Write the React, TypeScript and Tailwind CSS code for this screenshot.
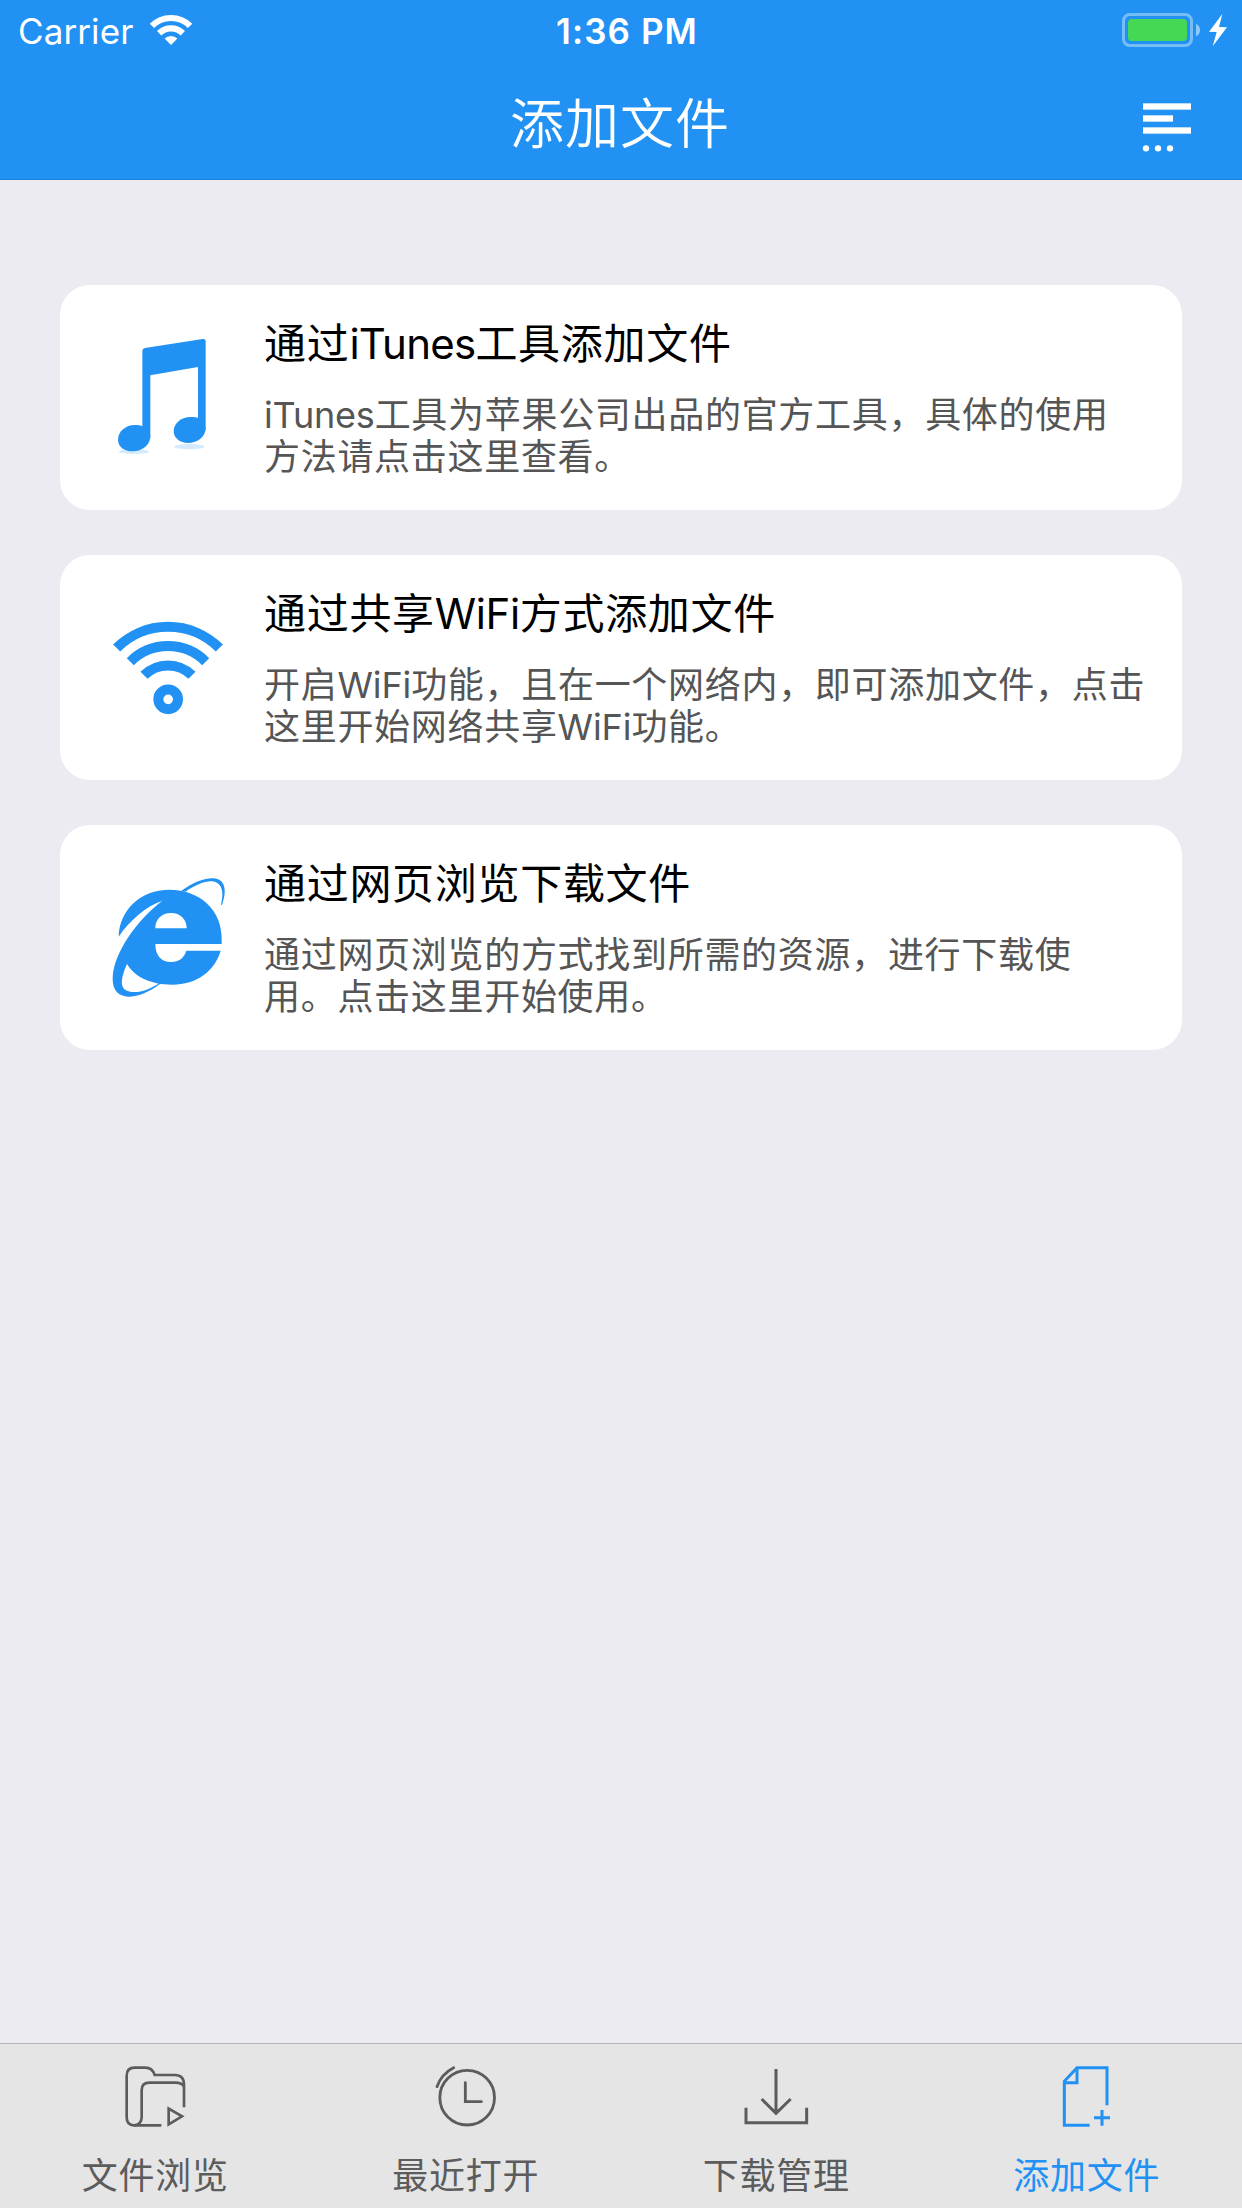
import type { ReactNode } from "react"

interface Method {
  title: ReactNode
  lines: ReactNode[]
  icon: ReactNode
}

interface Tab {
  label: string
  icon: ReactNode
  active?: boolean
}

function MusicIcon() {
  return (
    <svg viewBox="180 180 360 390" className="w-[120px] h-[130px]" fill="#2192f3">
      <ellipse cx="252" cy="545" rx="45" ry="7" fill="#d3ebfd" />
      <ellipse cx="418" cy="530" rx="45" ry="8" fill="#d3ebfd" />
      <path d="M277 243 Q277 236 285 234 L458 207 Q467 206 467 213 V480 H444 V291 L301 316 V505 H277 Z" />
      <path d="M301 498 C301 525 277 544 248 544 C222 544 204 530 204 509 C204 484 228 465 254 465 C264 465 272 466 278 469 Z" />
      <path d="M467 474 C467 500 443 519 414 519 C389 519 371 504 371 484 C371 459 395 441 422 441 C432 441 439 442 445 444 Z" />
    </svg>
  )
}

function ShareWifiIcon() {
  return (
    <svg viewBox="180 180 360 390" className="w-[120px] h-[130px]" fill="none" stroke="#2192f3" strokeWidth="30">
      <path d="M200 324 A218 218 0 0 1 508 324" />
      <path d="M241 365 A160 160 0 0 1 467 365" />
      <path d="M282 406 A102 102 0 0 1 426 406" />
      <circle cx="354.500" cy="478" r="29.500" />
    </svg>
  )
}

function BrowserIcon() {
  return (
    <svg viewBox="180 180 360 390" className="w-[120px] h-[130px]" fill="#2192f3">
      <path
        fillRule="evenodd"
        d="M206 380 C208 300 272 239 358 239 C450 239 517 300 515 390 V402 H316 C316 438 335 456 363 456 C388 456 403 442 409 422 H512 C495 482 440 524 367 524 L330 522 C300 545 265 560 236 560 C205 560 188 540 188 508 C188 430 262 330 336 273 C290 288 240 330 206 380 Z M316 355 H410 C410 327 391 309 363 309 C335 309 316 327 316 355 Z M231 462 C205 520 212 546 252 546 C280 546 300 535 326 521 C280 512 248 492 231 462 Z"
      />
      <path d="M393 243 C430 217 462 205 487 205 C522 205 534 235 516 285 L513 284 C524 243 514 214 482 214 C462 214 436 226 406 245 Z" />
    </svg>
  )
}

const methods: Method[] = [
  {
    title: <>通过<span className="tracking-[-0.75px]">iTunes</span>工具添加文件</>,
    lines: [
      <><span className="tracking-[-0.2px]">iTunes</span>工具为苹果公司出品的官方工具，具体的使用</>,
      "方法请点击这里查看。",
    ],
    icon: <MusicIcon />,
  },
  {
    title: <>通过共享<span className="tracking-[-0.4px]">WiFi</span>方式添加文件</>,
    lines: [
      <>开启<span className="tracking-[-0.1px]">WiFi</span>功能，且在一个网络内，即可添加文件，点击</>,
      <>这里开始网络共享<span className="tracking-[-0.1px]">WiFi</span>功能。</>,
    ],
    icon: <ShareWifiIcon />,
  },
  {
    title: "通过网页浏览下载文件",
    lines: ["通过网页浏览的方式找到所需的资源，进行下载使", "用。点击这里开始使用。"],
    icon: <BrowserIcon />,
  },
]

const tabs: Tab[] = [
  {
    label: "文件浏览",
    icon: (
      <svg viewBox="235 99 225 198" className="w-[75px] h-[66px]" fill="none" stroke="currentColor" strokeWidth="8">
        <path d="M365 286 H283 Q261 286 261 262 V137 Q261 113 285 113 H317 Q338 113 345 135 H405 Q433 135 433 164 V232" />
        <path d="M283 286 Q305 285 306 262 V181 Q306 158 329 158 H408 Q425 158 433 169" />
        <path d="M387 236 V283 L427 259 Z" />
      </svg>
    ),
  },
  {
    label: "最近打开",
    icon: (
      <svg viewBox="205 99 225 198" className="w-[75px] h-[66px]" fill="none" stroke="currentColor" strokeWidth="8.500" strokeLinecap="round">
        <circle cx="322.500" cy="203" r="82" />
        <path d="M317 158 V215 H365" />
        <path d="M232 170 Q245 132 282 113" />
      </svg>
    ),
  },
  {
    label: "下载管理",
    icon: (
      <svg viewBox="237 99 225 198" className="w-[75px] h-[66px]" fill="none" stroke="currentColor" strokeWidth="9">
        <path d="M348 117 V249 M305 207 L348 250 L392 207" />
        <path d="M258 233 V278 H440 V233" />
      </svg>
    ),
  },
  {
    label: "添加文件",
    active: true,
    icon: (
      <svg viewBox="269 99 225 198" className="w-[75px] h-[66px]" fill="none" stroke="currentColor" strokeWidth="9">
        <path d="M391 286 H315 V154 L353 113 H443 V226" />
        <path d="M353 113 V158 H315" />
        <path d="M404 263 H452 M428 240 V287" />
      </svg>
    ),
  },
]

function StatusBar() {
  return (
    <div className="h-[60px] grid grid-cols-3 items-start">
      <div className="flex items-start pl-[18px]">
        <span className="mt-[10px] w-[116px] text-[35px] leading-[42px] tracking-[0.1px]">Carrier</span>
        <svg viewBox="148 12 46 36" className="w-[46px] h-9 mt-3 ml-[14px]" fill="none" stroke="white" strokeWidth="6.200">
          <path d="M151.900 25.900 A27 27 0 0 1 190.100 25.900" />
          <path d="M159.200 33.200 A16.700 16.700 0 0 1 182.800 33.200" />
          <path d="M171 45 L164.600 38.600 A9 9 0 0 1 177.400 38.600 Z" fill="white" stroke="none" />
        </svg>
      </div>
      <div className="mt-[10px] pl-[12px] text-center text-[35px] leading-[42px] font-semibold tracking-[1.1px]">1:36 PM</div>
      <div className="flex justify-end pr-3 pt-3">
        <svg viewBox="120 36 330 108" className="w-[110px] h-9" fill="none">
          <rect x="130.500" y="43.500" width="204" height="93" rx="19" stroke="#75bdf8" strokeWidth="9" />
          <rect x="144" y="57" width="177" height="66" rx="11" fill="#44d855" />
          <path d="M348 71 Q360 77 360 90 Q360 103 348 109 Z" fill="#90c8f9" />
          <path d="M427 42 L387 95 L410 96 L398 139 L441 82 L417 81 Z" fill="white" />
        </svg>
      </div>
    </div>
  )
}

function NavBar() {
  return (
    <div className="h-[120px] grid grid-cols-[1fr_auto_1fr] items-center border-b border-[#1d7fd3]">
      <div />
      <h1 className="text-[54px] leading-[64px] font-[350] tracking-[1px] mt-[11px] mr-[2px]">添加文件</h1>
      <div className="flex justify-end pr-[50px] mt-[15px]">
        <svg viewBox="186 306 150 153" className="w-[50px] h-[51px]" fill="white">
          <rect x="189" y="310" width="144" height="19" />
          <rect x="189" y="346" width="90" height="19" />
          <rect x="189" y="382" width="144" height="19" />
          <circle cx="198" cy="445" r="9.500" />
          <circle cx="234" cy="445" r="9.500" />
          <circle cx="270" cy="445" r="9.500" />
        </svg>
      </div>
    </div>
  )
}

function MethodCard({ title, lines, icon }: Method) {
  return (
    <section className="h-[225px] flex bg-white rounded-[30px] pl-[50px] pt-[31px]">
      <div className="mt-[14px] shrink-0">{icon}</div>
      <div className="ml-[34px] whitespace-nowrap">
        <h2 className="text-[42px] leading-[56px] tracking-[0.7px] text-black">{title}</h2>
        <div className="mt-[22px] text-[36px] leading-[42px] tracking-[0.7px] text-[#555555]">
          {lines.map((line, i) => (
            <p key={i}>{line}</p>
          ))}
        </div>
      </div>
    </section>
  )
}

export default function App() {
  return (
    <div className="w-[1242px] h-[2208px] flex flex-col bg-[#ebebf1] overflow-hidden font-['Inter','Noto_Sans_CJK_SC',sans-serif]">
      <header className="bg-[#2192f3] text-white">
        <StatusBar />
        <NavBar />
      </header>

      <main className="flex-1 flex flex-col gap-[45px] px-[60px] pt-[105px]">
        {methods.map((method, i) => (
          <MethodCard key={i} {...method} />
        ))}
      </main>

      <nav className="h-[165px] grid grid-cols-4 bg-[#e5e5e5] border-t border-[#b8b8ba]">
        {tabs.map((tab) => (
          <div
            key={tab.label}
            className={`flex flex-col items-center pt-[19px] ${tab.active ? "text-[#2192f3]" : "text-[#5c5c5c]"}`}
          >
            {tab.icon}
            <span className="mt-[21px] text-[36px] leading-[52px] tracking-[0.7px]">{tab.label}</span>
          </div>
        ))}
      </nav>
    </div>
  )
}
